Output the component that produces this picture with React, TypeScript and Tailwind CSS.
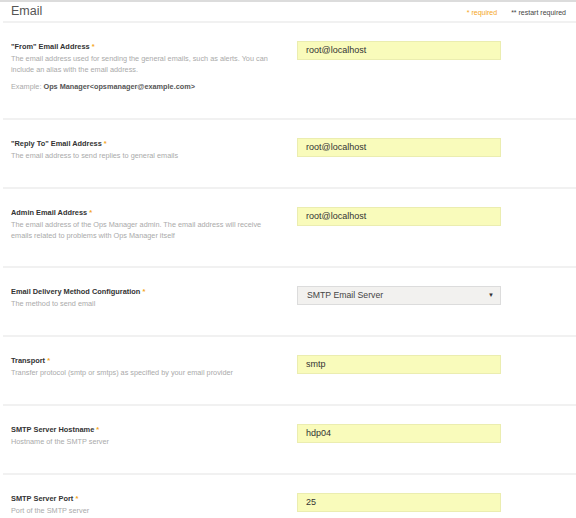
import React from "react";

type TField = {
    label: string;
    desc: React.ReactNode;
    value: string;
    select?: boolean;
    example?: boolean;
};

const fields: TField[] = [
    {
        label: "\"From\" Email Address",
        desc: <>The email address used for sending the general emails, such as alerts. You can<br />include an alias with the email address.</>,
        value: "root@localhost",
        example: true,
    },
    { label: "\"Reply To\" Email Address", desc: "The email address to send replies to general emails", value: "root@localhost" },
    {
        label: "Admin Email Address",
        desc: <>The email address of the Ops Manager admin. The email address will receive<br />emails related to problems with Ops Manager itself</>,
        value: "root@localhost",
    },
    { label: "Email Delivery Method Configuration", desc: "The method to send email", value: "SMTP Email Server", select: true },
    { label: "Transport", desc: "Transfer protocol (smtp or smtps) as specified by your email provider", value: "smtp" },
    { label: "SMTP Server Hostname", desc: "Hostname of the SMTP server", value: "hdp04" },
    { label: "SMTP Server Port", desc: "Port of the SMTP server", value: "25" },
];

function FieldRow({ field }: { field: TField }) {
    return (
        <div className="flex min-h-[69px] border-b-2 border-[#f1f1f1] pt-[18px] pb-[25px]">
            {/* label + help text */}
            <div className="w-[294px] shrink-0 pl-[8px]">
                <div className="text-[7.4px] leading-[12px] font-bold text-[#333]">
                    {field.label} <span className="text-[#f5a623]">*</span>
                </div>
                <div className="text-[7.3px] leading-[11px] text-[#aaa] whitespace-nowrap">{field.desc}</div>
                {field.example && (
                    <div className="mt-[6px] text-[7.3px] leading-[12px] text-[#aaa] whitespace-nowrap">
                        Example: <span className="font-bold text-[#555]">Ops Manager&lt;opsmanager@example.com&gt;</span>
                    </div>
                )}
            </div>
            {/* value */}
            {field.select ? (
                <div className="w-[204px] h-[19px] flex items-center justify-between bg-[#f2f1ef] border border-[#dcdcdc] pl-[9px] pr-[6px] text-[8.7px] text-[#444]">
                    <span>{field.value}</span>
                    <span className="text-[6px] text-[#333]">▼</span>
                </div>
            ) : (
                <div className="w-[204px] h-[19px] flex items-center bg-[#f9fbbb] border border-[#ebedb0] pl-[8px] text-[9px] text-[#333]">
                    {field.value}
                </div>
            )}
        </div>
    );
}

export default function App() {
    return (
        <div className="w-[576px] h-[518px] overflow-hidden bg-white border-t-2 border-[#dcdcdc]" style={{ fontFamily: "'Liberation Sans', Arial, sans-serif" }}>
            <div className="ml-[3px]">
                {/* header */}
                <div className="h-[21px] flex items-center justify-between border-b-2 border-[#f1f1f1] pl-[8px] pr-[10px]">
                    <span className="text-[12.5px] text-[#555] font-light">Email</span>
                    <div className="flex gap-[14px] text-[7px] pt-[4px]">
                        <span className="text-[#f5a623]">* required</span>
                        <span className="text-[#444]">** restart required</span>
                    </div>
                </div>
                {fields.map((f) => (
                    <FieldRow key={f.label} field={f} />
                ))}
            </div>
        </div>
    );
}
